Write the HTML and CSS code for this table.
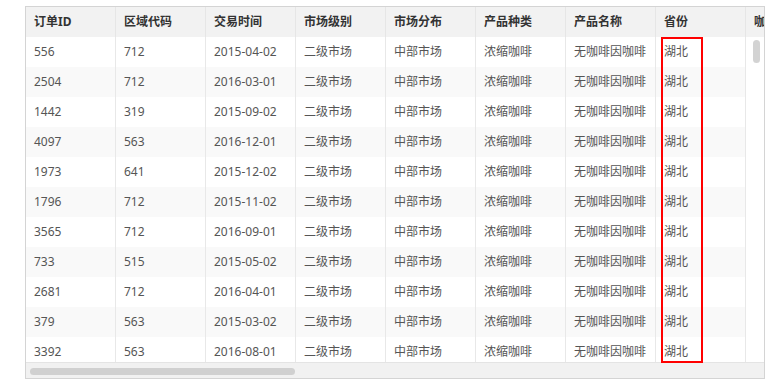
FILE: index.html
```html
<!DOCTYPE html>
<html lang="zh-CN">
<head>
<meta charset="utf-8">
<title>订单表</title>
<link rel="stylesheet" href="styles.css">
</head>
<body>
<div class="frame">
  <div class="thead">
    <div class="th">订单ID</div>
    <div class="th">区域代码</div>
    <div class="th">交易时间</div>
    <div class="th">市场级别</div>
    <div class="th">市场分布</div>
    <div class="th">产品种类</div>
    <div class="th">产品名称</div>
    <div class="th">省份</div>
    <div class="th">咖啡类型</div>
  </div>
  <div class="main">
    <div class="rows">
      <div class="tr"><div class="td">556</div><div class="td">712</div><div class="td">2015-04-02</div><div class="td">二级市场</div><div class="td">中部市场</div><div class="td">浓缩咖啡</div><div class="td">无咖啡因咖啡</div><div class="td">湖北</div></div>
      <div class="tr"><div class="td">2504</div><div class="td">712</div><div class="td">2016-03-01</div><div class="td">二级市场</div><div class="td">中部市场</div><div class="td">浓缩咖啡</div><div class="td">无咖啡因咖啡</div><div class="td">湖北</div></div>
      <div class="tr"><div class="td">1442</div><div class="td">319</div><div class="td">2015-09-02</div><div class="td">二级市场</div><div class="td">中部市场</div><div class="td">浓缩咖啡</div><div class="td">无咖啡因咖啡</div><div class="td">湖北</div></div>
      <div class="tr"><div class="td">4097</div><div class="td">563</div><div class="td">2016-12-01</div><div class="td">二级市场</div><div class="td">中部市场</div><div class="td">浓缩咖啡</div><div class="td">无咖啡因咖啡</div><div class="td">湖北</div></div>
      <div class="tr"><div class="td">1973</div><div class="td">641</div><div class="td">2015-12-02</div><div class="td">二级市场</div><div class="td">中部市场</div><div class="td">浓缩咖啡</div><div class="td">无咖啡因咖啡</div><div class="td">湖北</div></div>
      <div class="tr"><div class="td">1796</div><div class="td">712</div><div class="td">2015-11-02</div><div class="td">二级市场</div><div class="td">中部市场</div><div class="td">浓缩咖啡</div><div class="td">无咖啡因咖啡</div><div class="td">湖北</div></div>
      <div class="tr"><div class="td">3565</div><div class="td">712</div><div class="td">2016-09-01</div><div class="td">二级市场</div><div class="td">中部市场</div><div class="td">浓缩咖啡</div><div class="td">无咖啡因咖啡</div><div class="td">湖北</div></div>
      <div class="tr"><div class="td">733</div><div class="td">515</div><div class="td">2015-05-02</div><div class="td">二级市场</div><div class="td">中部市场</div><div class="td">浓缩咖啡</div><div class="td">无咖啡因咖啡</div><div class="td">湖北</div></div>
      <div class="tr"><div class="td">2681</div><div class="td">712</div><div class="td">2016-04-01</div><div class="td">二级市场</div><div class="td">中部市场</div><div class="td">浓缩咖啡</div><div class="td">无咖啡因咖啡</div><div class="td">湖北</div></div>
      <div class="tr"><div class="td">379</div><div class="td">563</div><div class="td">2015-03-02</div><div class="td">二级市场</div><div class="td">中部市场</div><div class="td">浓缩咖啡</div><div class="td">无咖啡因咖啡</div><div class="td">湖北</div></div>
      <div class="tr"><div class="td">3392</div><div class="td">563</div><div class="td">2016-08-01</div><div class="td">二级市场</div><div class="td">中部市场</div><div class="td">浓缩咖啡</div><div class="td">无咖啡因咖啡</div><div class="td">湖北</div></div>
    </div>
    <div class="vbar"><div class="vthumb"></div></div>
    <div class="highlight"></div>
  </div>
  <div class="hbar"><div class="hthumb"></div></div>
</div>
</body>
</html>
```
FILE: styles.css
```css
html, body {
  margin: 0;
  padding: 0;
  background: #ffffff;
}
body {
  font-family: "Noto Sans", "Noto Sans CJK SC", sans-serif;
  font-size: 12px;
  color: #555555;
}
.frame {
  margin: 6px 0 0 25px;
  width: 738px;
  height: 371px;
  border: 1px solid #d4d4d4;
  display: flex;
  flex-direction: column;
  overflow: hidden;
}
.thead {
  height: 30px;
  flex: none;
  display: flex;
  background: #f2f2f2;
  overflow: hidden;
}
.th {
  flex: none;
  width: 81px;
  padding-left: 8px;
  border-right: 1px solid #e6e6e6;
  line-height: 30px;
  font-weight: bold;
  color: #333333;
  white-space: nowrap;
  overflow: hidden;
}
.main {
  position: relative;
  height: 325px;
  flex: none;
  display: flex;
}
.rows {
  width: 720px;
  flex: none;
  overflow: hidden;
}
.tr {
  display: flex;
  height: 30px;
  background: #ffffff;
}
.tr:nth-child(even) {
  background: #f9f9f9;
}
.td {
  flex: none;
  width: 81px;
  padding-left: 8px;
  border-right: 1px solid #e8e8e8;
  line-height: 30px;
  white-space: nowrap;
  overflow: hidden;
}
.vbar {
  flex: 1;
  background: #ffffff;
  padding: 3px 0 0 7px;
}
.vthumb {
  width: 7px;
  height: 23px;
  border-radius: 4px;
  background: #d3d3d3;
}
.highlight {
  position: absolute;
  left: 635px;
  top: 0;
  width: 38px;
  height: 322px;
  border: 2px solid #ff0000;
}
.hbar {
  flex: 1;
  background: #f1f1f1;
  border-top: 1px solid #e4e4e4;
  padding: 5px 0 0 4px;
}
.hthumb {
  width: 265px;
  height: 7px;
  border-radius: 4px;
  background: #d0d0d0;
}
```
